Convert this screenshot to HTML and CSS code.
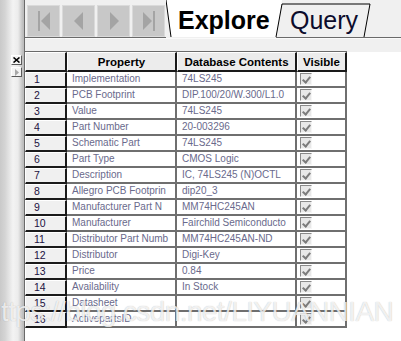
FILE: index.html
```html
<!DOCTYPE html>
<html lang="en">
<head>
  <meta charset="UTF-8" />
  <title>Explore</title>
  <link rel="stylesheet" href="styles.css">
</head>
<body>

  <div class="window">
    <aside class="side">
      <div class="side-btn">
        <svg width="7" height="6" viewBox="0 0 7 6"><path d="M0.5 0.5 L6.5 5.5 M6.5 0.5 L0.5 5.5" stroke="#000" stroke-width="1.6"/></svg>
      </div>
      <div class="side-btn">
        <svg width="6" height="7" viewBox="0 0 6 7"><polygon points="1,0 5,3.5 1,7" fill="#a8a8a8"/></svg>
      </div>
    </aside>

    <div class="main">
      <div class="toolbar">
        <div class="navs">
          <div class="nav">
            <svg width="14" height="20" viewBox="0 0 14 20"><rect x="1" y="0" width="2" height="20" fill="#a4a4a4"/><polygon points="4,10 13,1 13,19" fill="#a4a4a4"/></svg>
          </div>
          <div class="nav">
            <svg width="14" height="20" viewBox="0 0 14 20"><polygon points="2,10 11,1 11,19" fill="#a4a4a4"/></svg>
          </div>
          <div class="nav">
            <svg width="14" height="20" viewBox="0 0 14 20"><polygon points="12,10 3,1 3,19" fill="#a4a4a4"/></svg>
          </div>
          <div class="nav">
            <svg width="14" height="20" viewBox="0 0 14 20"><polygon points="10,10 1,1 1,19" fill="#a4a4a4"/><rect x="11" y="0" width="2" height="20" fill="#a4a4a4"/></svg>
          </div>
        </div>

        <div class="tabs">
          <svg class="tab-shapes" width="235" height="38" viewBox="0 0 235 38">
            <polygon points="0,0 116,0 110,37 5,37" fill="#ffffff"/>
            <polygon points="116,4 204,4 198,37 110,37" fill="#f0f0f0"/>
            <polyline points="0,0 5,37" fill="none" stroke="#000" stroke-width="1"/>
            <polyline points="110,37 116,4 204,4 198,37" fill="none" stroke="#000" stroke-width="1"/>
            <line x1="110" y1="37.5" x2="235" y2="37.5" stroke="#6a6a6a"/>
          </svg>
          <span class="tab active">Explore</span>
          <span class="tab">Query</span>
        </div>
      </div>
      <div class="band"></div>

      <table class="props">
        <thead>
          <tr>
            <th class="num"></th>
            <th class="prop">Property</th>
            <th class="val">Database Contents</th>
            <th class="vis">Visible</th>
          </tr>
        </thead>
        <tbody>
          <tr><td class="num">1</td><td>Implementation</td><td>74LS245</td><td class="vis"><span class="chk"></span></td></tr>
          <tr><td class="num">2</td><td>PCB Footprint</td><td>DIP.100/20/W.300/L1.0</td><td class="vis"><span class="chk"></span></td></tr>
          <tr><td class="num">3</td><td>Value</td><td>74LS245</td><td class="vis"><span class="chk"></span></td></tr>
          <tr><td class="num">4</td><td>Part Number</td><td>20-003296</td><td class="vis"><span class="chk"></span></td></tr>
          <tr><td class="num">5</td><td>Schematic Part</td><td>74LS245</td><td class="vis"><span class="chk"></span></td></tr>
          <tr><td class="num">6</td><td>Part Type</td><td>CMOS Logic</td><td class="vis"><span class="chk"></span></td></tr>
          <tr><td class="num">7</td><td>Description</td><td>IC, 74LS245 (N)OCTL</td><td class="vis"><span class="chk"></span></td></tr>
          <tr><td class="num">8</td><td>Allegro PCB Footprin</td><td>dip20_3</td><td class="vis"><span class="chk"></span></td></tr>
          <tr><td class="num">9</td><td>Manufacturer Part N</td><td>MM74HC245AN</td><td class="vis"><span class="chk"></span></td></tr>
          <tr><td class="num">10</td><td>Manufacturer</td><td>Fairchild Semiconducto</td><td class="vis"><span class="chk"></span></td></tr>
          <tr><td class="num">11</td><td>Distributor Part Numb</td><td>MM74HC245AN-ND</td><td class="vis"><span class="chk"></span></td></tr>
          <tr><td class="num">12</td><td>Distributor</td><td>Digi-Key</td><td class="vis"><span class="chk"></span></td></tr>
          <tr><td class="num">13</td><td>Price</td><td>0.84</td><td class="vis"><span class="chk"></span></td></tr>
          <tr><td class="num">14</td><td>Availability</td><td>In Stock</td><td class="vis"><span class="chk"></span></td></tr>
          <tr><td class="num">15</td><td>Datasheet</td><td></td><td class="vis"><span class="chk"></span></td></tr>
          <tr><td class="num">16</td><td>ActivepartsID</td><td></td><td class="vis"><span class="chk"></span></td></tr>
        </tbody>
      </table>
    </div>

    <div class="watermark">https://blog.csdn.net/LIYUANNIAN</div>
  </div>

</body>
</html>
```

FILE: styles.css
```css
* {
  margin: 0;
  padding: 0;
  box-sizing: border-box;
}

body {
  font-family: 'Liberation Sans', Arial, sans-serif;
  background-color: white;
  width: 401px;
  height: 341px;
  overflow: hidden;
}

.window {
  position: relative;
  display: flex;
  height: 341px;
}

/* left docking strip */
.side {
  width: 25px;
  flex-shrink: 0;
  background: linear-gradient(to right, #c9c9c9 0, #d4d4d4 5px, #f3f3f3 13px, #ececec 18px, #bdbdbd 23px);
  border-right: 1px solid #6a6a6a;
  padding: 55px 0 0 11px;
}

.side-btn {
  width: 11px;
  height: 10px;
  margin-bottom: 2px;
  background: #f4f4f4;
  border: 1px solid #fff;
  border-right-color: #5a5a5a;
  border-bottom-color: #5a5a5a;
  display: flex;
  align-items: center;
  justify-content: center;
}

.main {
  flex: 1;
}

.toolbar {
  display: flex;
  height: 38px;
  background: #f0f0f0;
}

.navs {
  display: flex;
  gap: 2px;
  padding: 5px 0 0 2px;
  width: 141px;
  border-bottom: 1px solid #6a6a6a;
}

.nav {
  width: 33px;
  height: 32px;
  background: #c8c8c8;
  border: 1px solid #dadada;
  display: flex;
  align-items: center;
  justify-content: center;
}

.tabs {
  position: relative;
  flex: 1;
  display: flex;
}

.tab-shapes {
  position: absolute;
  left: 0;
  top: 0;
}

.tab {
  position: relative;
  font-size: 25px;
  line-height: 28px;
  padding-top: 6px;
}

.tab.active {
  font-weight: bold;
  color: #000;
  padding-left: 12px;
  width: 124px;
}

.tab:not(.active) {
  color: #0c0c2c;
}

.band {
  height: 14px;
  background: #f0f0f0;
  border-top: 1px solid #fafafa;
}

/* property grid */
.props {
  border-collapse: separate;
  border-spacing: 0;
  table-layout: fixed;
  width: 322px;
}

.props th {
  height: 20px;
  background: #ececec;
  border-top: 1px solid #ffffff;
  border-left: 1px solid #ffffff;
  border-right: 2px solid #1a1a1a;
  border-bottom: 2px solid #1a1a1a;
  box-shadow: 0 -1px 0 #6a6a6a;
  font-size: 11.5px;
  font-weight: bold;
  color: #000;
  text-align: center;
  white-space: nowrap;
  overflow: hidden;
}

.props th.num { width: 42px; }
.props th.prop { width: 110px; }
.props th.val { width: 120px; }
.props th.vis { width: 50px; }

.props td {
  height: 16px;
  border-right: 2px solid #6f6f6f;
  border-bottom: 2px solid #6f6f6f;
  font-size: 10px;
  line-height: 14px;
  color: #6a6a8c;
  padding-left: 5px;
  white-space: nowrap;
  overflow: hidden;
}

.props td.num {
  background: #f0f0f0;
  border-top: 1px solid #ffffff;
  border-left: 1px solid #ffffff;
  border-right: 2px solid #1a1a1a;
  border-bottom: 2px solid #1a1a1a;
  line-height: 13px;
  font-size: 10.5px;
  color: #1c1040;
  padding-left: 8px;
}

.props td.vis {
  padding-left: 3px;
}

.chk {
  display: block;
  width: 12px;
  height: 12px;
  background: #e8e8e8;
  border-top: 1px solid #8a8a8a;
  border-left: 1px solid #8a8a8a;
  border-right: 1px solid #f6f6f6;
  border-bottom: 1px solid #f6f6f6;
  position: relative;
}

.chk::after {
  content: "";
  position: absolute;
  left: 3px;
  top: 1px;
  width: 3px;
  height: 6px;
  border-right: 2px solid #7c7c7c;
  border-bottom: 2px solid #7c7c7c;
  transform: rotate(40deg);
}

/* blog watermark over the bottom rows */
.watermark {
  position: absolute;
  left: -14px;
  top: 296px;
  font-size: 28px;
  letter-spacing: -0.6px;
  color: rgba(255, 255, 255, 0.8);
  text-shadow: 0 0 1px rgba(0, 0, 0, 0.28);
  white-space: nowrap;
  pointer-events: none;
}
```
